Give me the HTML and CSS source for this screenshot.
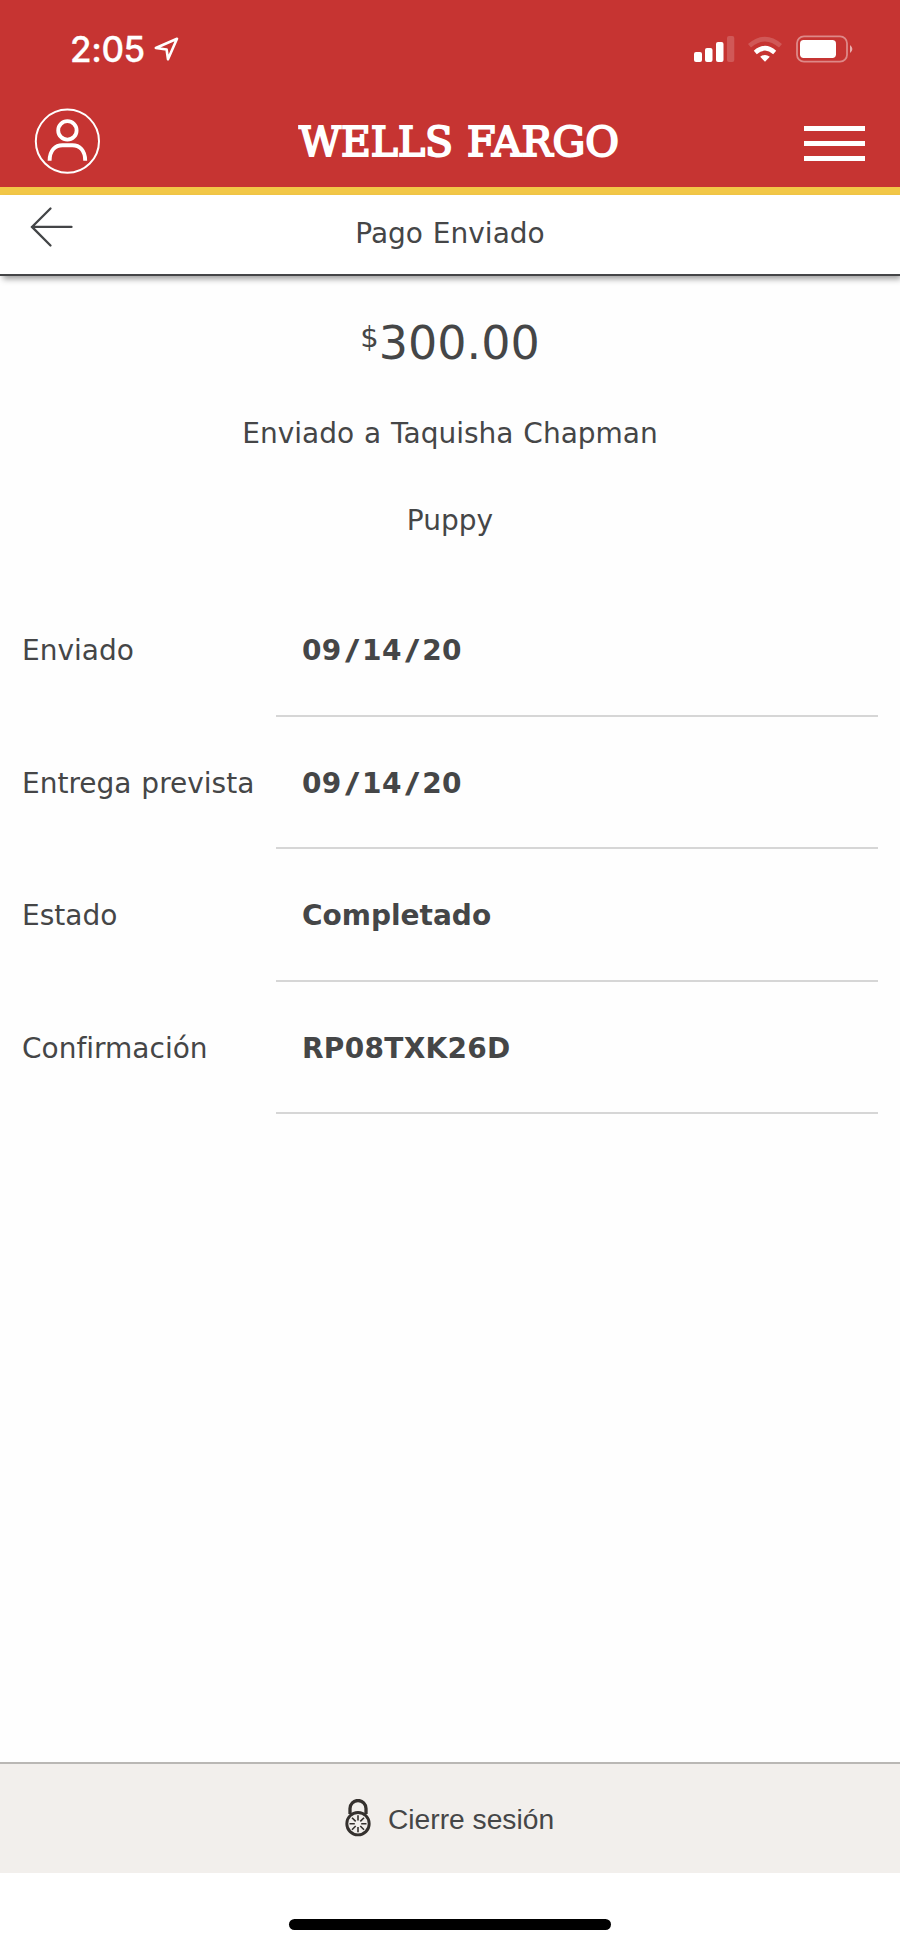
FILE: index.html
```html
<!DOCTYPE html>
<html lang="es">
<head>
<meta charset="utf-8">
<title>Pago Enviado</title>
<link rel="stylesheet" href="styles.css">
</head>
<body>
<div class="screen">
  <header class="header">
    <div class="status">
      <div class="status-left">
        <span class="clock">2:05</span>
        <svg class="location" width="26" height="26" viewBox="0 0 26 26"><path d="M1.8 12 23 2.8 14 23.3 12.6 13.5Z" fill="none" stroke="#fff" stroke-width="2.6" stroke-linejoin="round"/></svg>
      </div>
      <svg class="indicators" width="162" height="30" viewBox="0 0 162 30">
        <g fill="#fff">
          <rect x="0" y="18" width="8" height="10" rx="2"/>
          <rect x="11" y="14" width="7.5" height="14" rx="2"/>
          <rect x="22" y="8" width="7.5" height="20" rx="2"/>
          <rect x="33" y="2" width="7.3" height="26" rx="2" opacity=".18"/>
          <path d="M71 27.8 66.2 22.8Q71 19 75.8 22.8Z"/>
        </g>
        <path d="M61.3 18.4Q71 10 80.7 18.4" fill="none" stroke="#fff" stroke-width="4.6"/>
        <path d="M55.5 11.7Q71-1.6 86.5 11.7" fill="none" stroke="#fff" stroke-width="4.6" opacity=".18"/>
        <rect x="103" y="2.3" width="50" height="25.4" rx="7" fill="none" stroke="#fff" stroke-width="1.8" opacity=".42"/>
        <rect x="106" y="6" width="36" height="18" rx="3.7" fill="#fff"/>
        <path d="M156 10.9Q160.8 15 156 19.1Z" fill="#fff" opacity=".6"/>
      </svg>
    </div>
    <div class="brandbar">
      <svg class="profile" width="66" height="66" viewBox="-.4 -.2 66 66" fill="none" stroke="#fff">
        <circle cx="33" cy="33" r="31.6" stroke-width="2"/>
        <circle cx="33" cy="22.2" r="9.2" stroke-width="3.8"/>
        <path d="M15.2 52.5C15.2 42 21 37 28 37H38C45 37 50.8 42 50.8 52.5" stroke-width="3.9"/>
      </svg>
      <svg class="logo" width="324" height="60" viewBox="0 0 324 60">
        <text x="1" y="42.3" textLength="154" lengthAdjust="spacingAndGlyphs">WELLS</text>
        <text x="169" y="42.3" textLength="152" lengthAdjust="spacingAndGlyphs">FARGO</text>
      </svg>
      <div class="menu"><i></i><i></i><i></i></div>
    </div>
  </header>
  <nav class="titlebar">
    <svg class="back" width="44" height="42" viewBox="0 0 44 42" fill="none" stroke="#434547" stroke-width="2.3" stroke-linecap="round"><path d="M20.5 2.5 2 20.9 20.5 39.5M2 20.9H41.5"/></svg>
    <h1>Pago Enviado</h1>
    <span></span>
  </nav>
  <main class="content">
    <p class="amount"><span class="currency">$</span>300.00</p>
    <p class="recipient">Enviado a Taquisha Chapman</p>
    <p class="memo">Puppy</p>
    <dl class="details">
      <div class="row"><dt>Enviado</dt><dd class="date">09<span>/</span>14<span>/</span>20</dd></div>
      <div class="row"><dt>Entrega prevista</dt><dd class="date">09<span>/</span>14<span>/</span>20</dd></div>
      <div class="row"><dt>Estado</dt><dd>Completado</dd></div>
      <div class="row"><dt>Confirmación</dt><dd class="code">RP08TXK26D</dd></div>
    </dl>
  </main>
  <footer class="signoff">
    <svg width="26" height="38" viewBox="0 0 26 38" fill="none" stroke="#35312e">
      <path d="M5 15V9.5A8 8 0 0 1 21 9.5V15" stroke-width="3.3"/>
      <circle cx="13" cy="24.7" r="11.2" stroke-width="2.9"/>
      <path d="M13 16.2v5.3M13 27.9v5.3M4.5 24.7h5.3M16.2 24.7h5.3M7 18.7l3.7 3.7M15.3 27l3.7 3.7M7 30.7l3.7-3.7M15.3 22.4l3.7-3.7" stroke-width="1.6"/>
    </svg>
    <span>Cierre sesión</span>
  </footer>
  <div class="home"><div class="home-bar"></div></div>
</div>
</body>
</html>
```

FILE: styles.css
```css
* { box-sizing: border-box; }
body { margin: 0; background: #fefefe; }
.screen {
  width: 900px;
  height: 1947px;
  display: flex;
  flex-direction: column;
  overflow: hidden;
  color: #454647;
  font: 28px/34px Verdana, "DejaVu Sans", sans-serif;
}
.header { height: 195px; flex: none; background: #c63432; border-bottom: 8px solid #f2c747; }
.status { height: 100px; display: flex; justify-content: space-between; padding: 34px 44px 0 70px; }
.status-left { display: flex; gap: 9px; }
.clock { font: 500 35px/31px Inter, sans-serif; letter-spacing: -.4px; color: #fff; width: 75px; white-space: nowrap; -webkit-text-stroke: .3px #fff; }
.location { margin-top: 2px; }
.brandbar { height: 87px; padding: 8px 35px 0 34px; display: grid; grid-template-columns: 264px 324px 1fr; align-items: start; }
.logo { margin-top: 6px; }
.logo text { font: 40.5px "DejaVu Serif", serif; fill: #fff; stroke: #fff; stroke-width: 2px; }
.menu { justify-self: end; display: grid; gap: 10px; margin-top: 18px; }
.menu i { width: 61px; height: 5px; background: #fff; }
.titlebar {
  height: 81px;
  flex: none;
  display: grid;
  grid-template-columns: 200px 500px 200px;
  border-bottom: 2px solid #444547;
  box-shadow: 2px 4px 6px -1px rgba(0, 0, 0, .38);
  background: #fff;
}
.back { margin: 11px 0 0 30px; }
h1 { margin: 22px 0 0; font: inherit; text-align: center; word-spacing: 1px; }
.content { flex: 1; text-align: center; }
p { margin: 0; }
.amount { margin-top: 37px; font-size: 46px; line-height: 60px; }
.currency { font-size: 29px; vertical-align: 12px; line-height: 1; }
.recipient { margin-top: 44px; word-spacing: 1px; }
.memo { margin-top: 53px; }
.details { margin: 46px 22px 0; text-align: left; }
.row { height: 132.6px; display: grid; grid-template-columns: 254px 602px; }
dt { padding-top: 50px; word-spacing: 1px; white-space: nowrap; }
dd { margin: 0; padding: 50px 0 0 26px; font-weight: bold; border-bottom: 2px solid #d6d6d6; }
.date { letter-spacing: .3px; }
.date span { display: inline-block; margin: 0 5px; transform: scaleX(1.4); }
.code { letter-spacing: .3px; }
.signoff {
  height: 111px;
  flex: none;
  border-top: 2px solid #b9b7b4;
  background: #f2efec;
  display: flex;
  gap: 17px;
  padding: 35px 0 0 345px;
  font: 28.2px/40px "Liberation Sans", Arial, sans-serif;
}
.home { height: 74px; flex: none; padding-top: 46px; background: #fff; }
.home-bar { width: 322px; height: 11px; border-radius: 6px; background: #000; margin: 0 auto; }
```
